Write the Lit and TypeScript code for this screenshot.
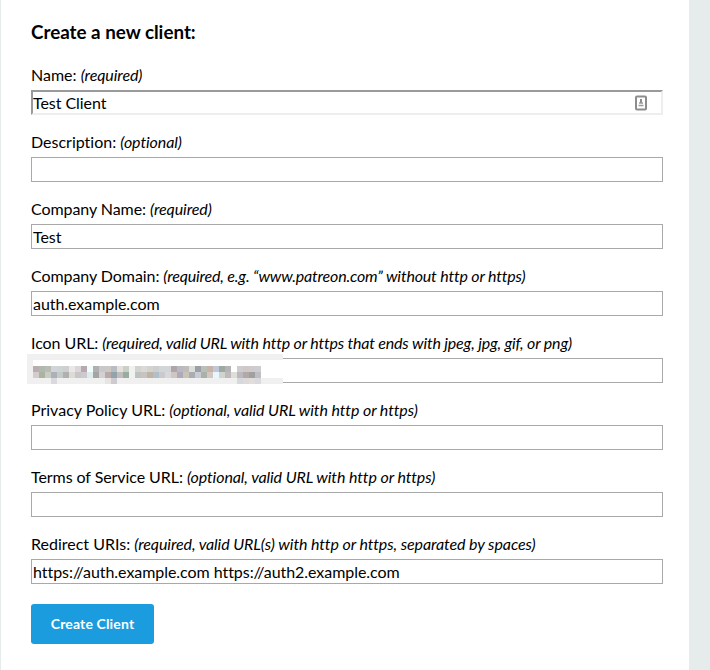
import { LitElement, html, css } from "lit";

interface Field {
  label: string;
  hint: string;
  value: string;
  active?: boolean;
  masked?: boolean;
  fit?: "snug" | "tight";
}

const FIELDS: Field[] = [
  { label: "Name:", hint: "(required)", value: "Test Client", active: true },
  { label: "Description:", hint: "(optional)", value: "" },
  { label: "Company Name:", hint: "(required)", value: "Test", fit: "snug" },
  { label: "Company Domain:", hint: "(required, e.g. “www.patreon.com” without http or https)", value: "auth.example.com", fit: "tight" },
  { label: "Icon URL:", hint: "(required, valid URL with http or https that ends with jpeg, jpg, gif, or png)", value: "", masked: true, fit: "tight" },
  { label: "Privacy Policy URL:", hint: "(optional, valid URL with http or https)", value: "" },
  { label: "Terms of Service URL:", hint: "(optional, valid URL with http or https)", value: "", fit: "snug" },
  { label: "Redirect URIs:", hint: "(required, valid URL(s) with http or https, separated by spaces)", value: "https://auth.example.com https://auth2.example.com" },
];

// Colours of the 6px blocks that hide the icon address, row by row.
const blank = (n: number): string[] => Array(n).fill("f0f0f0");
const MASK: string[][] = [
  "b9adb0 b0b9af b8bdb3 d3d4da ccd4d4 cfcfcf e8e8e8 dcd6d9 b5aab0 f2fcfb b0b0b0 c8c8c8 ccc8c4 b8bdc5 e4e0dc c9d0c6 f0f2f2 d3d3d0 d9d9d5 d6d2ce cdced0 d2d6d9 d2d6d9 aea6a8 bab8c2 c0bcbc dcdedb 9c9fa5 bac0b8 c7b3aa c0c8d8 a0a8a3 b3b3b8 ffffff d0ccce d0c8c8 cfcacb ccccd1".split(" "),
  "d3cccc abb3a0 c8ccc3 acb0b8 c4cac7 b0b0b0 e0dad6 c7c7c7 cccad0 dcecec a4a4a4 d3cfd3 b8aaaa 94a3a9 c0bebb 9aaba2 f0f2f2 bfc3c0 c8c3c0 bcb4a4 b2bec9 cac9cb d8d8dc cfc7c3 b0aab8 c9c4b6 a9adb0 c8ccd6 adb0a8 d2c8bf e8f6ff cdd5ce c0b9b9 deddd8 bcb8bf b3a8a8 a0a0a2 bfbec5".split(" "),
  [...blank(3), "dadadc", ...blank(8), "e8e4e4", "cccbd0", ...blank(20), "d7d8dc", "dedada", "e0dddd", "dadade"],
];

class AppRoot extends LitElement {
  static styles = css`
    :host {
      display: block;
      height: 670px;
      overflow: hidden;
      background: #e6ebeb;
      color: #000;
      font: 16px/20px Lato, "Liberation Sans", sans-serif;
      font-variant-ligatures: none;
    }
    .panel {
      box-sizing: border-box;
      width: 689px;
      height: 670px;
      padding: 20px 26px 0 30px;
      border-left: 1px solid #e6ebeb;
      background: #fff;
    }
    h1 {
      margin: 0 0 21px;
      font-size: 18.8px;
      font-weight: 700;
      line-height: 24px;
    }
    .field {
      display: flex;
      flex-direction: column;
      height: 67px;
    }
    label { height: 25px; white-space: nowrap; }
    em { letter-spacing: -0.09px; }
    .snug, .tight { letter-spacing: -0.07px; }
    .tight em { letter-spacing: -0.17px; }
    .value { letter-spacing: -0.05px; }
    .box {
      position: relative;
      display: flex;
      align-items: center;
      justify-content: space-between;
      box-sizing: border-box;
      height: 25px;
      padding: 0 1px;
      border: 1px solid #a9a9a9;
      background: #fff;
      white-space: pre;
    }
    .active {
      padding: 0 13px 0 0;
      border: 2px solid;
      border-color: #9a9a9a #eee #eee #9a9a9a;
    }
    .mask {
      position: absolute;
      left: -5px;
      top: -5px;
      box-sizing: border-box;
      width: 256px;
      height: 30px;
      border: 6px solid #f0f0f0;
      border-right: 0;
      padding-top: 6px;
      background: #fff;
    }
    .row { display: flex; }
    .cell { width: 6px; height: 6px; }
    button {
      display: block;
      width: 123px;
      height: 40px;
      margin: 3px 0 0;
      padding: 0;
      border: 0;
      border-radius: 3px;
      background: #1b9cde;
      color: #fff;
      font: 700 14px/40px Lato, "Liberation Sans", sans-serif;
      letter-spacing: 0.15px;
    }
  `;

  renderBox(f: Field) {
    return html`<div class="box ${f.active ? "active" : ""}">
      <span class="value">${f.value}</span>
      ${f.active
        ? html`<svg width="14" height="16" viewBox="0 0 14 16">
            <rect x="2" y="1.500" width="10" height="13" rx="1" fill="#fff" stroke="#8c8c8c" stroke-width="2" />
            <path d="M7 4v4" stroke="#8c8c8c" stroke-width="2" />
            <path d="M5 8h4M4.500 10.500h5" stroke="#9a9a9a" stroke-width="1.500" />
          </svg>`
        : ""}
      ${f.masked
        ? html`<div class="mask">${MASK.map(
            (r) => html`<div class="row">${r.map((c) => html`<i class="cell" style="background:#${c}"></i>`)}</div>`
          )}</div>`
        : ""}
    </div>`;
  }

  render() {
    return html`<main class="panel">
      <h1>Create a new client:</h1>
      ${FIELDS.map((f) => html`<div class="field"><label class=${f.fit ?? ""}>${f.label} <em>${f.hint}</em></label>${this.renderBox(f)}</div>`)}
      <button>Create Client</button>
    </main>`;
  }
}
customElements.define("app-root", AppRoot);
